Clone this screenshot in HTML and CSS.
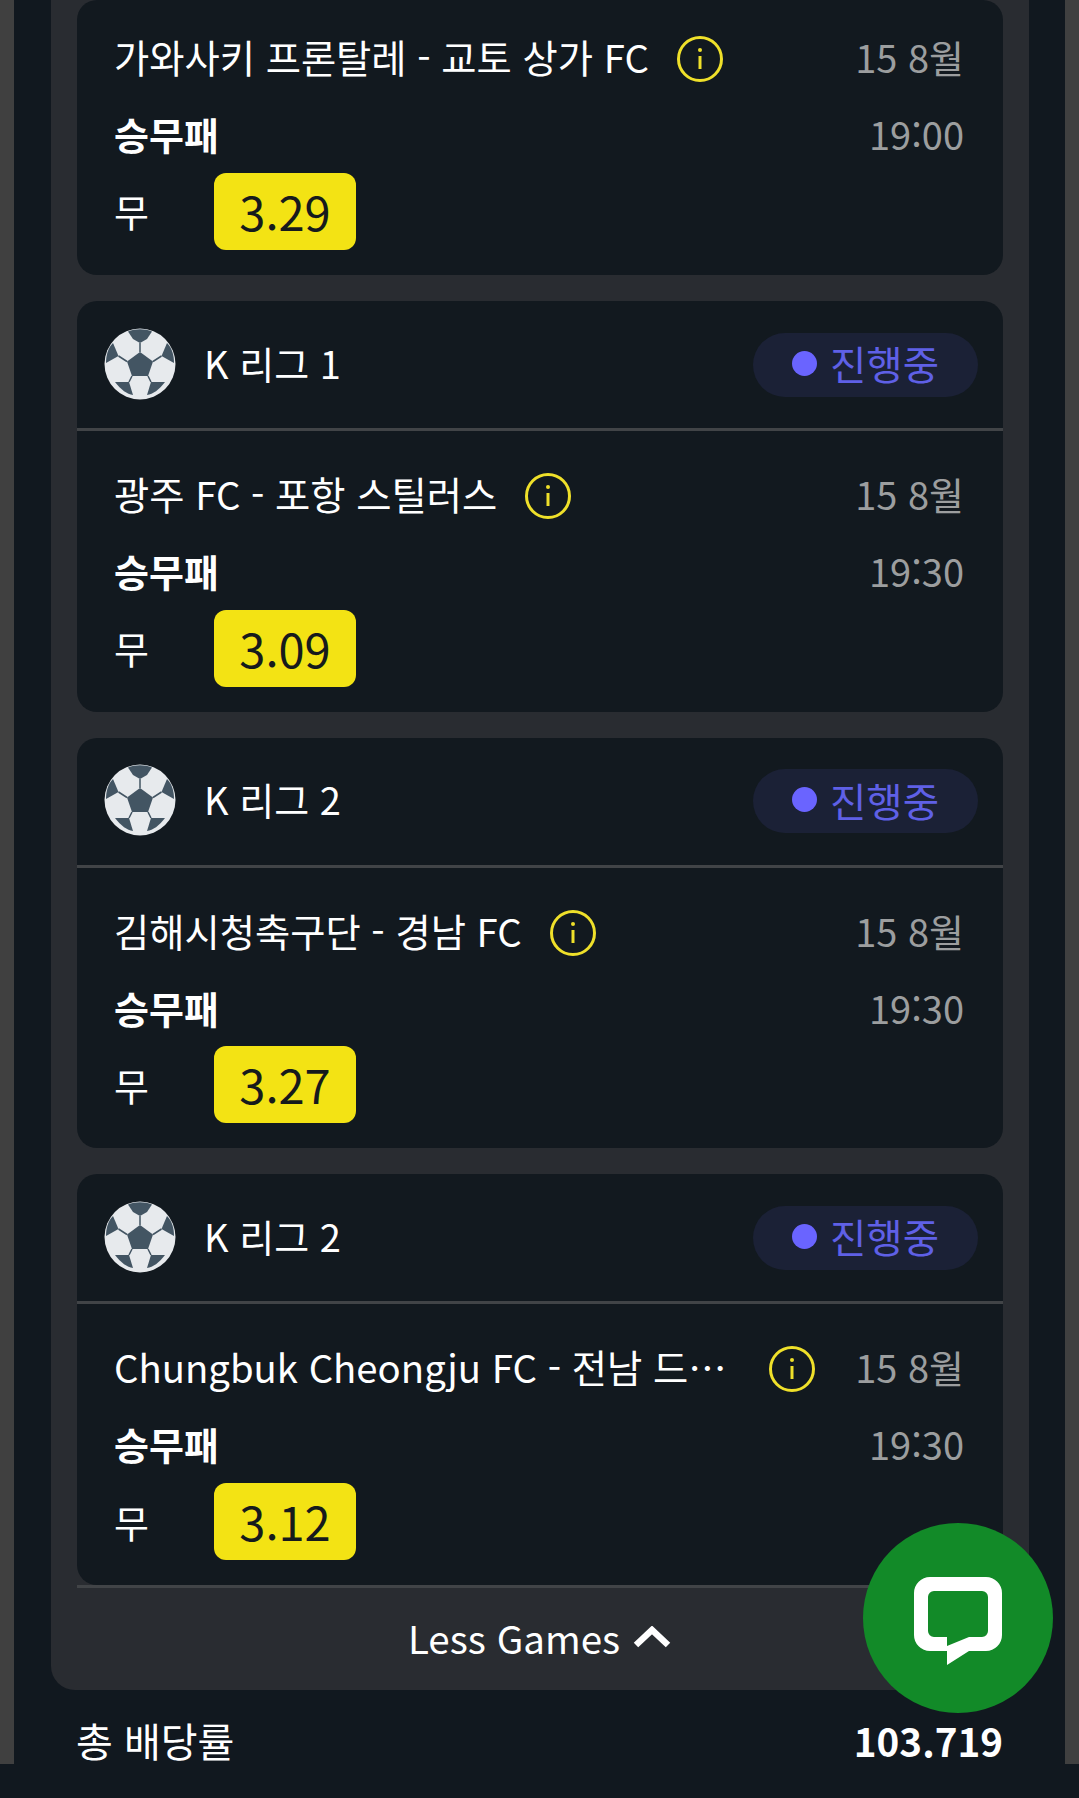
FILE: index.html
```html
<!DOCTYPE html>
<html lang="ko">
<head>
<meta charset="utf-8">
<title>베팅 슬립</title>
<link rel="stylesheet" href="styles.css">
</head>
<body>
<svg class="defs" width="0" height="0" aria-hidden="true">
  <defs>
    <symbol id="ball" viewBox="0 0 72 72">
      <circle cx="36" cy="36" r="35.5" fill="#e7eaed"/>
      <g fill="#435563">
        <path d="M36 24 49 33.5 44 48H28L23 33.5Z"/>
        <path d="M24 3.5C31 .5 41 .5 48 3.5L43 11 36 15 29 11Z"/>
        <path d="M9 15 14.500 28 2 35C2 27 4 20 9 15Z"/>
        <path d="M63 15 57.500 28 70 35C70 27 68 20 63 15Z"/>
        <path d="M11 54H25L29 67C23 66 17 62 11 54Z" />
        <path d="M47 54H61C55 62 49 66 43 67Z"/>
      </g>
      <g fill="none" stroke="#435563" stroke-width="1.500">
        <path d="M36 15V24M14.500 28 23 33.500M57.500 28 49 33.500M25 54 28 48M47 54 44 48"/>
      </g>
    </symbol>
    <symbol id="info" viewBox="0 0 46 46">
      <circle cx="23" cy="23" r="21.500" fill="none" stroke="#efe02a" stroke-width="3"/>
      <circle cx="23" cy="14" r="2" fill="#efe02a"/>
      <path d="M23 20V33" stroke="#efe02a" stroke-width="3"/>
    </symbol>
  </defs>
</svg>
<div class="page">
  <div class="frame">
    <main class="panel">
      <section class="card">
        <div class="body body-first">
          <div class="row">
            <div class="title-wrap"><span class="title">가와사키 프론탈레 - 교토 상가 FC</span><svg class="info"><use href="#info"/></svg></div>
            <span class="meta">15 8월</span>
          </div>
          <div class="row row-market">
            <span class="market">승무패</span>
            <span class="meta">19:00</span>
          </div>
          <div class="pick"><span class="pick-label">무</span><span class="odds">3.29</span></div>
        </div>
      </section>

      <section class="card">
        <header class="head">
          <svg class="ball"><use href="#ball"/></svg>
          <span class="league">K 리그 1</span>
          <span class="status"><i class="dot"></i>진행중</span>
        </header>
        <div class="body">
          <div class="row">
            <div class="title-wrap"><span class="title">광주 FC - 포항 스틸러스</span><svg class="info"><use href="#info"/></svg></div>
            <span class="meta">15 8월</span>
          </div>
          <div class="row row-market">
            <span class="market">승무패</span>
            <span class="meta">19:30</span>
          </div>
          <div class="pick"><span class="pick-label">무</span><span class="odds">3.09</span></div>
        </div>
      </section>

      <section class="card">
        <header class="head">
          <svg class="ball"><use href="#ball"/></svg>
          <span class="league">K 리그 2</span>
          <span class="status"><i class="dot"></i>진행중</span>
        </header>
        <div class="body">
          <div class="row">
            <div class="title-wrap"><span class="title">김해시청축구단 - 경남 FC</span><svg class="info"><use href="#info"/></svg></div>
            <span class="meta">15 8월</span>
          </div>
          <div class="row row-market">
            <span class="market">승무패</span>
            <span class="meta">19:30</span>
          </div>
          <div class="pick"><span class="pick-label">무</span><span class="odds">3.27</span></div>
        </div>
      </section>

      <section class="card">
        <header class="head">
          <svg class="ball"><use href="#ball"/></svg>
          <span class="league">K 리그 2</span>
          <span class="status"><i class="dot"></i>진행중</span>
        </header>
        <div class="body">
          <div class="row">
            <div class="title-wrap"><span class="title">Chungbuk Cheongju FC - 전남 드래곤즈</span><svg class="info"><use href="#info"/></svg></div>
            <span class="meta">15 8월</span>
          </div>
          <div class="row row-market">
            <span class="market">승무패</span>
            <span class="meta">19:30</span>
          </div>
          <div class="pick"><span class="pick-label">무</span><span class="odds">3.12</span></div>
        </div>
      </section>

      <button class="less" type="button"><span class="less-text">Less Games</span>
        <svg class="chevron" viewBox="0 0 38 22"><path d="M3 19 19 4 35 19" fill="none" stroke="#fff" stroke-width="6.500"/></svg>
      </button>
    </main>
    <footer class="total">
      <span class="total-label">총 배당률</span>
      <span class="total-value">103.719</span>
    </footer>
  </div>
  <a class="chat" href="#" aria-label="채팅">
    <svg viewBox="0 0 88 88" width="88" height="88"><path fill="#fff" fill-rule="evenodd" d="M16 0H72a16 16 0 0 1 16 16V58a16 16 0 0 1-16 16H55L33 88V74H16A16 16 0 0 1 0 58V16A16 16 0 0 1 16 0ZM20 14H68a6 6 0 0 1 6 6V54a6 6 0 0 1-6 6H55L33 69V60H20a6 6 0 0 1-6-6V20a6 6 0 0 1 6-6Z"/></svg>
  </a>
</div>
</body>
</html>
```
FILE: styles.css
```css
* { box-sizing: border-box; }
html, body { margin: 0; padding: 0; }
body {
  background: #11181f;
  color: #fff;
  font-family: "Noto Sans CJK KR", "Noto Sans", sans-serif;
  font-size: 38px;
  line-height: 60px;
}
.defs { position: absolute; }
.page {
  position: relative;
  width: 1079px;
  height: 1798px;
  overflow: hidden;
  background: #11181f;
}
.frame {
  height: 1764px;
  padding: 0 36px 0 37px;
  border-left: 14px solid #404040;
  border-right: 14px solid #404040;
}
.panel {
  display: flex;
  flex-direction: column;
  gap: 26px;
  height: 1690px;
  padding: 0 26px;
  background: #292c31;
  border-radius: 0 0 24px 24px;
}
.card {
  background: #12191f;
  border-radius: 20px;
  flex: none;
}
.head {
  display: flex;
  align-items: center;
  height: 130px;
  padding: 0 25px 0 27px;
  border-bottom: 3px solid #414447;
}
.ball { width: 72px; height: 72px; flex: none; margin-bottom: 2px; }
.league { margin-left: 28px; flex: 1; padding-bottom: 4px; }
.status {
  display: flex;
  align-items: center;
  gap: 13px;
  height: 64px;
  padding: 0 39px 3px;
  border-radius: 32px;
  background: #1b2136;
  color: #5f60e6;
  font-size: 39.5px;
}
.dot {
  width: 25px;
  height: 25px;
  border-radius: 50%;
  background: #6a64ff;
}
.body {
  display: flex;
  flex-direction: column;
  height: 280.67px;
  padding: 33px 39px 25px 37px;
}
.body-first {
  height: 275px;
  padding-top: 27px;
}
.row {
  display: flex;
  align-items: center;
  justify-content: space-between;
  height: 60px;
}
.row-market { margin-top: 17px; }
.title-wrap {
  display: flex;
  align-items: center;
  gap: 28px;
  min-width: 0;
}
.title {
  max-width: 627px;
  font-size: 38.3px;
  white-space: nowrap;
  overflow: hidden;
  text-overflow: ellipsis;
}
.info { width: 46px; height: 46px; flex: none; margin-top: 4px; }
.meta { color: #9c9e9f; flex: none; white-space: nowrap; }
.market { font-weight: 700; }
.pick {
  display: flex;
  align-items: center;
  margin-top: 8.7px;
}
.pick-label { width: 100px; }
.odds {
  width: 142px;
  height: 77px;
  border-radius: 12px;
  background: #f3e314;
  color: #161a1c;
  font-size: 47px;
  line-height: 75px;
  text-align: center;
}
.less {
  display: flex;
  align-items: center;
  justify-content: center;
  gap: 12px;
  flex: 1;
  margin-top: -26px;
  padding: 0 0 4px;
  border: 0;
  border-top: 3px solid #414447;
  background: transparent;
  color: #fff;
  font: inherit;
  font-size: 38.6px;
}
.chevron { width: 40px; height: 22px; }
.total {
  display: flex;
  align-items: center;
  justify-content: space-between;
  height: 60px;
  margin-top: 20px;
  padding: 0 26px 0 25px;
}
.total-label { font-size: 40px; }
.total-value { font-weight: 700; font-size: 38.6px; }
.chat {
  position: absolute;
  left: 863px;
  top: 1523px;
  display: flex;
  align-items: center;
  justify-content: center;
  width: 190px;
  height: 190px;
  padding-top: 6px;
  border-radius: 50%;
  background: #128a28;
}
```
